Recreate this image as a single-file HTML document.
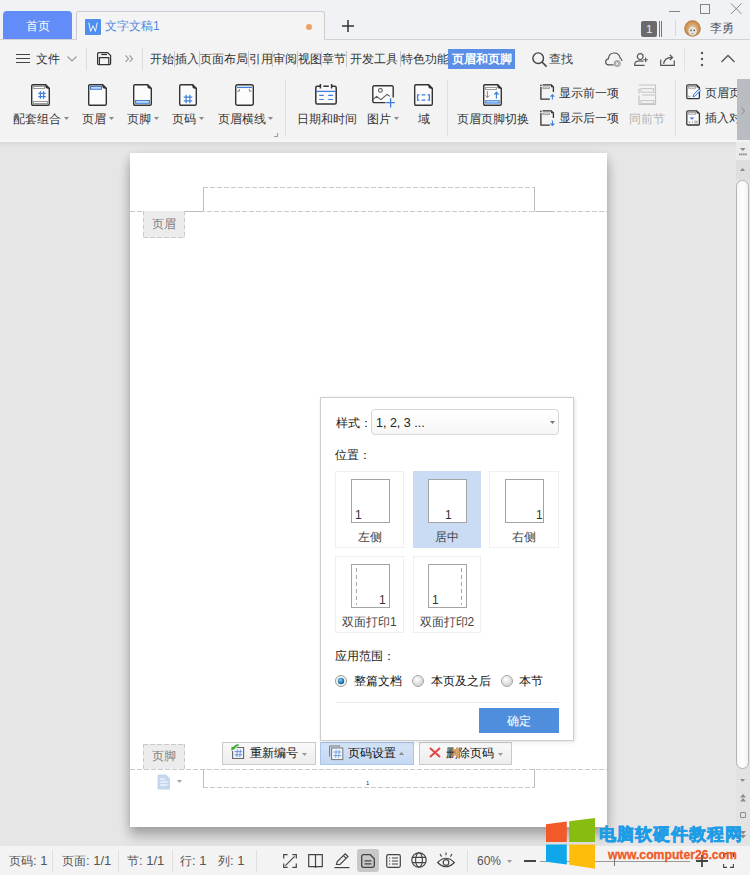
<!DOCTYPE html>
<html><head><meta charset="utf-8"><style>
*{box-sizing:border-box;margin:0;padding:0}
html,body{width:750px;height:875px;overflow:hidden;background:#e6e6e6;font-family:"Liberation Sans",sans-serif;color:#333;}
.a{position:absolute}
.t{position:absolute;white-space:nowrap;font-size:12px;line-height:14px}
svg{position:absolute;overflow:visible}
.sep{position:absolute;width:1px;background:#dcdcdc}
</style></head><body>
<div class="a" style="left:0px;top:0px;width:750px;height:40px;background:#f1f2f6"></div>
<div class="a" style="left:3px;top:11px;width:69px;height:29px;background:#628cf8;border-radius:4px 4px 0 0"></div>
<div class="t" style="left:26px;top:19px;color:#fff;font-size:12px;">首页</div>
<div class="a" style="left:76px;top:11px;width:249px;height:30px;background:#f4f4f4;border:1px solid #cdcdd0;border-bottom:none;border-radius:3px 3px 0 0"></div>
<div class="a" style="left:85px;top:19px;width:16px;height:16px;background:#4d8ef0;border-radius:1px"></div>
<svg style="left:85px;top:19px" width="16" height="16"><path d="M3.8 3.6 L5.6 12.4 L8 6.8 L10.4 12.4 L12.2 3.6" fill="none" stroke="#fff" stroke-width="0.9"/></svg>
<div class="t" style="left:105px;top:19px;color:#4f86e0;font-size:12px;">文字文稿1</div>
<div class="a" style="left:306px;top:24px;width:6px;height:6px;border-radius:3px;background:#f0a060"></div>
<svg style="left:341px;top:19px" width="14" height="14"><path d="M7 1V13M1 7H13" stroke="#333" stroke-width="1.5"/></svg>
<svg style="left:668px;top:4px" width="76" height="12"><path d="M1 7.5H12" stroke="#858585" stroke-width="1"/><rect x="32.5" y="0.5" width="9" height="9" fill="none" stroke="#858585" stroke-width="1"/><path d="M63 -0.5L73.5 10M73.5 -0.5L63 10" stroke="#858585" stroke-width="0.95"/></svg>
<div class="a" style="left:641px;top:21px;width:16px;height:16px;background:#6b6b6b;border-radius:2px"></div>
<div class="t" style="left:646px;top:22px;color:#e8e8e8;font-size:11.5px;">1</div>
<div class="a" style="left:659px;top:21px;width:1px;height:16px;background:#777"></div>
<div class="a" style="left:661px;top:21px;width:1px;height:16px;background:#777"></div>
<div class="sep" style="left:675px;top:20px;height:16px;background:#d8d8d8"></div>
<svg style="left:684px;top:20px" width="17" height="17"><defs><radialGradient id="av" cx="50%" cy="50%" r="50%"><stop offset="0" stop-color="#e0c8a8"/><stop offset="0.7" stop-color="#d49a5a"/><stop offset="1" stop-color="#b77a40"/></radialGradient></defs><circle cx="8.5" cy="8.5" r="8.3" fill="url(#av)"/><ellipse cx="8.6" cy="11" rx="4.2" ry="4.6" fill="#e6e2de"/><circle cx="7" cy="10.4" r="0.8" fill="#555"/><circle cx="10.2" cy="10.4" r="0.8" fill="#555"/><path d="M7.2 13.6H10" stroke="#999" stroke-width="0.8"/></svg>
<div class="t" style="left:710px;top:21px;color:#555;font-size:12px;">李勇</div>
<div class="a" style="left:0px;top:39px;width:750px;height:1px;background:#d2d2d6"></div>
<div class="a" style="left:0px;top:40px;width:750px;height:102px;background:#f3f3f3"></div>
<div class="a" style="left:77px;top:39px;width:247px;height:2px;background:#f4f4f4"></div>
<svg style="left:16px;top:54px" width="14" height="10"><path d="M0 0.5H14M0 4.5H14M0 8.5H14" stroke="#444" stroke-width="1.2"/></svg>
<div class="t" style="left:36px;top:52px;color:#333;font-size:12px;">文件</div>
<svg style="left:67px;top:56px" width="10" height="6"><path d="M0.5 0.5L5 5L9.5 0.5" fill="none" stroke="#999" stroke-width="1.1"/></svg>
<div class="sep" style="left:86px;top:48px;height:23px;background:#dcdcdc"></div>
<svg style="left:97px;top:52px" width="15" height="14"><path d="M1.8 0.6H10.6L13.6 3.6V11.4Q13.6 12.6 12.4 12.6H1.8Q0.6 12.6 0.6 11.4V1.8Q0.6 0.6 1.8 0.6Z" fill="none" stroke="#333" stroke-width="1.2"/><path d="M4.3 2.5H10" stroke="#333" stroke-width="1.2"/><path d="M2.4 12.6V5.6H11.8V12.6" fill="none" stroke="#333" stroke-width="1.2"/></svg>
<svg style="left:125px;top:55px" width="9" height="8"><path d="M0.5 0.5L3.5 3.7L0.5 7M4.5 0.5L7.5 3.7L4.5 7" fill="none" stroke="#999" stroke-width="1.1"/></svg>
<div class="sep" style="left:142px;top:48px;height:23px;background:#dcdcdc"></div>
<div class="t" style="left:150px;top:52px;color:#333;font-size:12px;">开始</div>
<div class="t" style="left:175px;top:52px;color:#333;font-size:12px;">插入</div>
<div class="t" style="left:200px;top:52px;color:#333;font-size:12px;">页面布局</div>
<div class="t" style="left:249px;top:52px;color:#333;font-size:12px;">引用</div>
<div class="t" style="left:273px;top:52px;color:#333;font-size:12px;">审阅</div>
<div class="t" style="left:298px;top:52px;color:#333;font-size:12px;">视图</div>
<div class="t" style="left:322px;top:52px;color:#333;font-size:12px;">章节</div>
<div class="t" style="left:350px;top:52px;color:#333;font-size:12px;">开发工具</div>
<div class="t" style="left:401px;top:52px;color:#333;font-size:12px;">特色功能</div>
<div class="sep" style="left:174px;top:51px;height:16px;background:#c8c8cc"></div>
<div class="sep" style="left:199px;top:51px;height:16px;background:#c8c8cc"></div>
<div class="sep" style="left:248px;top:51px;height:16px;background:#c8c8cc"></div>
<div class="sep" style="left:272px;top:51px;height:16px;background:#c8c8cc"></div>
<div class="sep" style="left:297px;top:51px;height:16px;background:#c8c8cc"></div>
<div class="sep" style="left:321px;top:51px;height:16px;background:#c8c8cc"></div>
<div class="sep" style="left:346px;top:51px;height:16px;background:#c8c8cc"></div>
<div class="sep" style="left:400px;top:51px;height:16px;background:#c8c8cc"></div>
<div class="a" style="left:448px;top:49px;width:67px;height:20px;background:#5b8ee6"></div>
<div class="t" style="left:452px;top:52px;color:#fff;font-size:12px;font-weight:bold">页眉和页脚</div>
<svg style="left:532px;top:52px" width="16" height="16"><circle cx="6.2" cy="6.2" r="5.3" fill="none" stroke="#444" stroke-width="1.4"/><path d="M10 10L14.6 14.6" stroke="#444" stroke-width="1.6"/></svg>
<div class="t" style="left:549px;top:52px;color:#444;font-size:12px;">查找</div>
<svg style="left:605px;top:52px" width="18" height="15"><path d="M8.6 12.8H3.6Q0.7 12.8 0.7 9.9Q0.7 7.3 3.3 6.9Q4 1 9.3 1Q14.2 1 15.3 6.3Q16.8 7 17 9" fill="none" stroke="#555" stroke-width="1.2"/><circle cx="12.2" cy="11.6" r="3.5" fill="#a9a9ac"/><path d="M10.9 10.3L13.5 12.9M13.5 10.3L10.9 12.9" stroke="#fff" stroke-width="1"/></svg>
<svg style="left:634px;top:53px" width="15" height="14"><circle cx="6.2" cy="3.6" r="2.9" fill="none" stroke="#555" stroke-width="1.2"/><path d="M10.6 12.4H0.7V11.2Q0.7 7.8 6 7.8Q8.2 7.8 9.4 8.4" fill="none" stroke="#555" stroke-width="1.2"/><path d="M9.2 6.8H14M11.6 4.4V9.2" stroke="#555" stroke-width="1.1"/></svg>
<svg style="left:660px;top:54px" width="15" height="12"><path d="M0.7 5.6V11.3H14.3V6.6" fill="none" stroke="#555" stroke-width="1.2"/><path d="M3.6 9.8Q4.4 3.6 12 3.4" fill="none" stroke="#555" stroke-width="1.2"/><path d="M9.8 0.8L12.5 3.4L9.9 6" fill="none" stroke="#555" stroke-width="1.2"/></svg>
<div class="sep" style="left:684px;top:48px;height:23px;background:#e2e2e2"></div>
<svg style="left:700px;top:51px" width="4" height="16"><circle cx="2" cy="2" r="1.2" fill="#555"/><circle cx="2" cy="8" r="1.2" fill="#555"/><circle cx="2" cy="14" r="1.2" fill="#555"/></svg>
<svg style="left:721px;top:54px" width="14" height="9"><path d="M0.5 8L7 1.5L13.5 8" fill="none" stroke="#555" stroke-width="1.3"/></svg>
<svg style="left:31px;top:84px" width="19" height="22"><path d="M0.7 2.0Q0.7 0.7 2.0 0.7H14.700000000000001L18.3 4.3V20.0Q18.3 21.3 17.0 21.3H2.0Q0.7 21.3 0.7 20.0Z" fill="#fcfcfc" stroke="#333" stroke-width="1.4"/><path d="M14.5 0.7L18.3 4.5L15.100000000000001 3.9000000000000004Z" fill="#333" stroke="#333" stroke-width="0.8"/><rect x="2.5" y="2.5" width="11" height="2" fill="#fff" stroke="#9a9a9a" stroke-width="1"/><rect x="2.5" y="17.5" width="14" height="2" fill="#fff" stroke="#9a9a9a" stroke-width="1"/><path d="M7.3 9.372H14.7M7.3 12.628H14.7M9.372 7.3V14.7M12.628 7.3V14.7" stroke="#3f7fdc" stroke-width="1.2"/></svg>
<div class="t" style="left:13px;top:112px;color:#333;font-size:12px;">配套组合</div>
<svg style="left:64px;top:117px" width="5" height="3"><path d="M0 0L5 0L2.5 3Z" fill="#8a8a8a"/></svg>
<svg style="left:88px;top:84px" width="19" height="22"><path d="M0.7 2.0Q0.7 0.7 2.0 0.7H14.700000000000001L18.3 4.3V20.0Q18.3 21.3 17.0 21.3H2.0Q0.7 21.3 0.7 20.0Z" fill="#fcfcfc" stroke="#333" stroke-width="1.4"/><path d="M14.5 0.7L18.3 4.5L15.100000000000001 3.9000000000000004Z" fill="#333" stroke="#333" stroke-width="0.8"/><rect x="2.6" y="2.6" width="10.8" height="2.6" fill="#eef4fc" stroke="#3f7fdc" stroke-width="1.2"/></svg>
<div class="t" style="left:82px;top:112px;color:#333;font-size:12px;">页眉</div>
<svg style="left:109px;top:117px" width="5" height="3"><path d="M0 0L5 0L2.5 3Z" fill="#8a8a8a"/></svg>
<svg style="left:133px;top:84px" width="19" height="22"><path d="M0.7 2.0Q0.7 0.7 2.0 0.7H14.700000000000001L18.3 4.3V20.0Q18.3 21.3 17.0 21.3H2.0Q0.7 21.3 0.7 20.0Z" fill="#fcfcfc" stroke="#333" stroke-width="1.4"/><path d="M14.5 0.7L18.3 4.5L15.100000000000001 3.9000000000000004Z" fill="#333" stroke="#333" stroke-width="0.8"/><rect x="2.6" y="16.6" width="13.8" height="2.6" fill="#eef4fc" stroke="#3f7fdc" stroke-width="1.2"/></svg>
<div class="t" style="left:127px;top:112px;color:#333;font-size:12px;">页脚</div>
<svg style="left:154px;top:117px" width="5" height="3"><path d="M0 0L5 0L2.5 3Z" fill="#8a8a8a"/></svg>
<svg style="left:179px;top:84px" width="18" height="22"><path d="M0.7 2.0Q0.7 0.7 2.0 0.7H13.700000000000001L17.3 4.3V20.0Q17.3 21.3 16.0 21.3H2.0Q0.7 21.3 0.7 20.0Z" fill="#fcfcfc" stroke="#333" stroke-width="1.4"/><path d="M13.5 0.7L17.3 4.5L14.100000000000001 3.9000000000000004Z" fill="#333" stroke="#333" stroke-width="0.8"/><path d="M4.75 13.129999999999999H13.25M4.75 16.87H13.25M7.13 10.75V19.25M10.870000000000001 10.75V19.25" stroke="#3f7fdc" stroke-width="1.2"/></svg>
<div class="t" style="left:172px;top:112px;color:#333;font-size:12px;">页码</div>
<svg style="left:199px;top:117px" width="5" height="3"><path d="M0 0L5 0L2.5 3Z" fill="#8a8a8a"/></svg>
<svg style="left:235px;top:84px" width="19" height="22"><path d="M0.7 2.7Q0.7 0.7 2.7 0.7H16.3Q18.3 0.7 18.3 2.7V19.3Q18.3 21.3 16.3 21.3H2.7Q0.7 21.3 0.7 19.3Z" fill="#fcfcfc" stroke="#333" stroke-width="1.4"/><path d="M2 3.4H17" stroke="#3f7fdc" stroke-width="1.3"/><path d="M4.4 5V7.2H2.2M14.4 5V7.2H16.6" fill="none" stroke="#888" stroke-width="1"/></svg>
<div class="t" style="left:218px;top:112px;color:#333;font-size:12px;">页眉横线</div>
<svg style="left:268px;top:117px" width="5" height="3"><path d="M0 0L5 0L2.5 3Z" fill="#8a8a8a"/></svg>
<svg style="left:274px;top:133px" width="4" height="4"><path d="M3.5 0V3.5H0" fill="none" stroke="#999" stroke-width="1"/></svg>
<div class="sep" style="left:285px;top:80px;height:56px;background:#e0e0e0"></div>
<svg style="left:315px;top:84px" width="22" height="21"><path d="M5.4 2.3H2.2Q0.8 2.3 0.8 3.8V18.5Q0.8 20 2.2 20H19.8Q21.2 20 21.2 18.5V3.8Q21.2 2.3 19.8 2.3H16.6M8.3 2.3H13.8" fill="#fbfbfb" stroke="#333" stroke-width="1.5"/><path d="M5.4 0V4.6M16.6 0V4.6" stroke="#333" stroke-width="1.5"/><path d="M1 7.4H21" stroke="#3f7fdc" stroke-width="1.3"/><path d="M4.2 11.4H8.8M13.2 11.4H18M4.2 15.5H8.8M13.2 15.5H18" stroke="#3f7fdc" stroke-width="1.2"/></svg>
<div class="t" style="left:297px;top:112px;color:#333;font-size:12px;">日期和时间</div>
<svg style="left:372px;top:85px" width="24" height="23"><path d="M13.5 17.6H2.4Q0.8 17.6 0.8 16V2.4Q0.8 0.8 2.4 0.8H19.6Q21.2 0.8 21.2 2.4V12.6" fill="#fbfbfb" stroke="#333" stroke-width="1.4"/><circle cx="8.4" cy="5.4" r="1.9" fill="none" stroke="#555" stroke-width="1.1"/><path d="M0.8 14.6L4.6 11.4L9 14.6L15 9.4L17.8 11.4" fill="none" stroke="#555" stroke-width="1.1"/><path d="M14.2 17.6H22.8M18.6 13.2V22.6" stroke="#3f7fdc" stroke-width="1.3"/></svg>
<div class="t" style="left:367px;top:112px;color:#333;font-size:12px;">图片</div>
<svg style="left:394px;top:117px" width="5" height="3"><path d="M0 0L5 0L2.5 3Z" fill="#8a8a8a"/></svg>
<svg style="left:414px;top:84px" width="19" height="22"><path d="M0.7 2.0Q0.7 0.7 2.0 0.7H14.700000000000001L18.3 4.3V20.0Q18.3 21.3 17.0 21.3H2.0Q0.7 21.3 0.7 20.0Z" fill="#fcfcfc" stroke="#333" stroke-width="1.4"/><path d="M14.5 0.7L18.3 4.5L15.100000000000001 3.9000000000000004Z" fill="#333" stroke="#333" stroke-width="0.8"/><path d="M5.4 10.8H3.6V16.2H5.4M7.6 10.8H11.4M7.6 16.2H11.4M13.6 10.8H15.4V16.2H13.6" fill="none" stroke="#3f7fdc" stroke-width="1.3"/></svg>
<div class="t" style="left:418px;top:112px;color:#333;font-size:12px;">域</div>
<div class="sep" style="left:447px;top:80px;height:56px;background:#e0e0e0"></div>
<svg style="left:483px;top:84px" width="19" height="22"><path d="M0.7 2.0Q0.7 0.7 2.0 0.7H14.700000000000001L18.3 4.3V20.0Q18.3 21.3 17.0 21.3H2.0Q0.7 21.3 0.7 20.0Z" fill="#fcfcfc" stroke="#333" stroke-width="1.4"/><path d="M14.5 0.7L18.3 4.5L15.100000000000001 3.9000000000000004Z" fill="#333" stroke="#333" stroke-width="0.8"/><rect x="2.5" y="3.5" width="11" height="2" fill="#fff" stroke="#9a9a9a" stroke-width="1"/><path d="M4.4 7.2V13.4M2.4 11.4L4.4 13.6L6.4 11.4" fill="none" stroke="#888" stroke-width="1"/><path d="M13.4 14.4V8.4M11.2 10.6L13.4 8.2L15.6 10.6" fill="none" stroke="#3f7fdc" stroke-width="1.2"/><rect x="2.8" y="16.8" width="13.4" height="2.2" fill="#eaf8fb" stroke="#3f7fdc" stroke-width="1.2"/></svg>
<div class="t" style="left:457px;top:112px;color:#333;font-size:12px;">页眉页脚切换</div>
<svg style="left:540px;top:84px" width="16" height="16"><path d="M0.9 2.8V15.1H9.8M2.6 0.9H11.2L13.4 3.1V8" fill="none" stroke="#333" stroke-width="1.3"/><rect x="0.2" y="0.6" width="1.4" height="1.4" fill="#333"/><path d="M11 0.6L13.7 3.3H11Z" fill="#333"/><rect x="3" y="3" width="6.4" height="1.6" fill="none" stroke="#9a9a9a" stroke-width="0.9"/><path d="M12.4 10.8V15.6M10.5 12.7L12.4 10.8L14.3 12.7" fill="none" stroke="#3f7fdc" stroke-width="1.1"/></svg>
<div class="t" style="left:559px;top:86px;color:#333;font-size:12px;">显示前一项</div>
<svg style="left:540px;top:110px" width="16" height="16"><path d="M0.9 2.8V15.1H9.8M2.6 0.9H11.2L13.4 3.1V8" fill="none" stroke="#333" stroke-width="1.3"/><rect x="0.2" y="0.6" width="1.4" height="1.4" fill="#333"/><path d="M11 0.6L13.7 3.3H11Z" fill="#333"/><rect x="3" y="3" width="6.4" height="1.6" fill="none" stroke="#9a9a9a" stroke-width="0.9"/><path d="M12.4 10.4V15.4M10.5 13.5L12.4 15.4L14.3 13.5" fill="none" stroke="#3f7fdc" stroke-width="1.1"/></svg>
<div class="t" style="left:559px;top:111px;color:#333;font-size:12px;">显示后一项</div>
<svg style="left:638px;top:84px" width="19" height="22"><path d="M1 1H17.5V10.2M1 4.6V9.6M1 11.6V20.4H17.5V12Q17.5 11 16.5 11H4" fill="none" stroke="#c4c4c4" stroke-width="1.2"/><rect x="3" y="4.6" width="12.6" height="3.6" fill="none" stroke="#c8c8c8" stroke-width="1.1"/><rect x="3" y="16.6" width="12.6" height="3" fill="none" stroke="#c8c8c8" stroke-width="1.1"/></svg>
<div class="t" style="left:629px;top:112px;color:#b4b4b4;font-size:12px;">同前节</div>
<div class="sep" style="left:675px;top:80px;height:56px;background:#e0e0e0"></div>
<svg style="left:686px;top:84px" width="16" height="16"><path d="M1.5 0.8H10.6L13.4 3.6V13.6Q13.4 14.6 12.4 14.6H1.8Q0.8 14.6 0.8 13.6V1.8Q0.8 0.8 1.8 0.8" fill="#fbfbfb" stroke="#333" stroke-width="1.3"/><path d="M10.6 0.5L13.7 3.6H10.6Z" fill="#333"/><rect x="2.6" y="2.6" width="7" height="1.6" fill="none" stroke="#9a9a9a" stroke-width="0.9"/><path d="M2.6 11.6V12.8H4.6" fill="none" stroke="#9a9a9a" stroke-width="0.9"/><path d="M7 13L7.6 10.4L13 5L14.6 6.6L9.2 12Z" fill="#d5e3f8" stroke="#3f7fdc" stroke-width="1"/></svg>
<div class="t" style="left:705px;top:86px;color:#333;font-size:12px;">页眉页</div>
<svg style="left:686px;top:110px" width="16" height="16"><path d="M1.5 0.8H10.6L13.4 3.6V14Q13.4 15 12.4 15H1.8Q0.8 15 0.8 14V1.8Q0.8 0.8 1.8 0.8" fill="#fbfbfb" stroke="#333" stroke-width="1.3"/><path d="M10.6 0.5L13.7 3.6H10.6Z" fill="#333"/><rect x="2.6" y="2.6" width="7" height="1.6" fill="none" stroke="#9a9a9a" stroke-width="0.9"/><path d="M3.4 7.4H8.4L5.9 9.8Z" fill="#3f7fdc"/><path d="M3.2 11.2V13H4.4M6.4 11.2V13M8.2 11.2H11.2V13H8.2" fill="none" stroke="#9a9a9a" stroke-width="0.9"/></svg>
<div class="t" style="left:705px;top:111px;color:#333;font-size:12px;">插入对</div>
<div class="a" style="left:737px;top:79px;width:13px;height:61px;background:#b9bcc1"></div>
<svg style="left:741px;top:107px" width="5" height="8"><path d="M0.5 0.5L3.5 4L0.5 7.5" fill="none" stroke="#888" stroke-width="1"/></svg>
<div class="a" style="left:0px;top:142px;width:736px;height:704px;background:#e6e6e6"></div>
<div class="a" style="left:0px;top:142px;width:736px;height:6px;background:linear-gradient(#d9d9d9,#e6e6e6)"></div>
<div class="a" style="left:0px;top:138px;width:737px;height:4px;background:linear-gradient(#f3f3f3,#f8f8f8)"></div>
<div class="a" style="left:130px;top:153px;width:477px;height:674px;background:#fff;box-shadow:0 4px 10px rgba(0,0,0,0.24),0 12px 12px rgba(0,0,0,0.14)"></div>
<div class="a" style="left:130px;top:211px;width:477px;height:1px;background:repeating-linear-gradient(90deg,#c9c9c9 0 5px,transparent 5px 7px)"></div>
<div class="a" style="left:203px;top:187px;width:332px;height:1px;background:repeating-linear-gradient(90deg,#c9c9c9 0 5px,transparent 5px 7px)"></div>
<div class="a" style="left:203px;top:187px;width:1px;height:24px;background:#bdbdbd"></div>
<div class="a" style="left:534px;top:187px;width:1px;height:24px;background:#bdbdbd"></div>
<div class="a" style="left:185px;top:211px;width:18px;height:1px;background:#bdbdbd"></div>
<div class="a" style="left:535px;top:211px;width:18px;height:1px;background:#bdbdbd"></div>
<div class="a" style="left:143px;top:211px;width:42px;height:27px;background:#ececec"></div>
<div class="a" style="left:143px;top:237px;width:42px;height:1px;background:repeating-linear-gradient(90deg,#c9c9c9 0 5px,transparent 5px 7px)"></div>
<div class="a" style="left:143px;top:211px;width:1px;height:27px;background:repeating-linear-gradient(180deg,#c9c9c9 0 4px,transparent 4px 7px)"></div>
<div class="a" style="left:184px;top:211px;width:1px;height:27px;background:repeating-linear-gradient(180deg,#c9c9c9 0 4px,transparent 4px 7px)"></div>
<div class="t" style="left:152px;top:217px;color:#808080;font-size:12px;">页眉</div>
<div class="a" style="left:143px;top:744px;width:42px;height:25px;background:#ececec"></div>
<div class="a" style="left:143px;top:744px;width:42px;height:1px;background:repeating-linear-gradient(90deg,#c9c9c9 0 5px,transparent 5px 7px)"></div>
<div class="a" style="left:143px;top:744px;width:1px;height:25px;background:repeating-linear-gradient(180deg,#c9c9c9 0 4px,transparent 4px 7px)"></div>
<div class="a" style="left:184px;top:744px;width:1px;height:25px;background:repeating-linear-gradient(180deg,#c9c9c9 0 4px,transparent 4px 7px)"></div>
<div class="t" style="left:152px;top:749px;color:#808080;font-size:12px;">页脚</div>
<div class="a" style="left:130px;top:769px;width:477px;height:1px;background:repeating-linear-gradient(90deg,#c9c9c9 0 5px,transparent 5px 7px)"></div>
<div class="a" style="left:203px;top:787px;width:332px;height:1px;background:repeating-linear-gradient(90deg,#c9c9c9 0 5px,transparent 5px 7px)"></div>
<div class="a" style="left:203px;top:769px;width:1px;height:19px;background:#bdbdbd"></div>
<div class="a" style="left:534px;top:769px;width:1px;height:19px;background:#bdbdbd"></div>
<div class="t" style="left:366px;top:779px;color:#333;font-size:6px;line-height:8px">1</div>
<svg style="left:157px;top:774px" width="14" height="16"><path d="M0.5 0.5H9L13 4.5V15.5H0.5Z" fill="#c5d6ee"/><path d="M3 5H8M3 8H10.5M3 11H10.5" stroke="#fff" stroke-width="1.2"/></svg>
<svg style="left:177px;top:780px" width="5" height="3"><path d="M0 0L5 0L2.5 3Z" fill="#9aa"/></svg>
<div class="a" style="left:222px;top:742px;width:94px;height:23px;background:linear-gradient(#f9f9f9,#ededed);border:1px solid #c9c9c9"></div>
<svg style="left:231px;top:744px" width="15" height="16"><path d="M1.6 7V14.5H12.6V3.5H5.6" fill="none" stroke="#666" stroke-width="1.1"/><path d="M3.6 7.6H11.2M3.6 10.8H11.2M6.4 5.4L5.8 13M9.4 5.4L8.8 13" stroke="#5b8ce8" stroke-width="0.9"/><path d="M7.6 0.9Q4 1.4 2.6 4.4" fill="none" stroke="#3cab3c" stroke-width="1.9"/><path d="M0.2 6.8L0.6 2.4L4.6 4.4Z" fill="#3cab3c"/></svg>
<div class="t" style="left:250px;top:746px;color:#111;font-size:12px;">重新编号</div>
<svg style="left:302px;top:753px" width="5" height="3"><path d="M0 0L5 0L2.5 3Z" fill="#999"/></svg>
<div class="a" style="left:320px;top:742px;width:94px;height:23px;background:linear-gradient(#d5e4f7,#c4d8f2);border:1px solid #a9c5ea"></div>
<svg style="left:329px;top:745px" width="15" height="16"><path d="M0.6 11.6V1H11.2" fill="none" stroke="#777" stroke-width="1"/><rect x="2.6" y="3" width="11.2" height="11.6" fill="#f0f6fd" stroke="#777" stroke-width="1"/><path d="M4.4 7H12.2M4.4 10.6H12.2M7.2 5L6.7 12.8M10.2 5L9.7 12.8" stroke="#6a96e6" stroke-width="0.85"/></svg>
<div class="t" style="left:348px;top:746px;color:#111;font-size:12px;">页码设置</div>
<svg style="left:399px;top:752px" width="5" height="3"><path d="M0 3L2.5 0L5 3Z" fill="#888"/></svg>
<div class="a" style="left:419px;top:742px;width:93px;height:23px;background:linear-gradient(#f9f9f9,#ededed);border:1px solid #c9c9c9"></div>
<svg style="left:429px;top:747px" width="12" height="11"><path d="M1 1L11 10M11 1L1 10" stroke="#e0464a" stroke-width="2"/></svg>
<div class="t" style="left:446px;top:746px;color:#111;font-size:12px;">删除页码</div>
<svg style="left:498px;top:753px" width="5" height="3"><path d="M0 0L5 0L2.5 3Z" fill="#999"/></svg>
<div class="a" style="left:320px;top:397px;width:254px;height:344px;background:#fff;border:1px solid #cdcdcd;box-shadow:1px 1px 4px rgba(0,0,0,0.12)"></div>
<div class="t" style="left:336px;top:416px;color:#222;font-size:12px;">样式：</div>
<div class="a" style="left:371px;top:409px;width:188px;height:26px;background:linear-gradient(#fff,#f6f6f6);border:1px solid #d6d6d6;border-radius:4px"></div>
<div class="t" style="left:376px;top:416px;color:#222;font-size:12.5px;">1, 2, 3 ...</div>
<svg style="left:550px;top:421px" width="5" height="3"><path d="M0 0L5 0L2.5 3Z" fill="#777"/></svg>
<div class="t" style="left:335px;top:448px;color:#222;font-size:12px;">位置：</div>
<div class="a" style="left:335px;top:471px;width:69px;height:77px;background:#fff;border:1px solid #efefef;"></div>
<div class="a" style="left:351px;top:479px;width:39px;height:44px;background:#fff;border:1px solid #a4a4a4"></div>
<div class="t" style="left:355px;top:508px;color:#333;font-size:12px;">1</div>
<div class="t" style="left:357.5px;top:530px;color:#444;font-size:12px;">左侧</div>
<div class="a" style="left:413px;top:471px;width:68px;height:77px;background:#c9dcf3;"></div>
<div class="a" style="left:428px;top:479px;width:39px;height:44px;background:#fff;border:1px solid #a4a4a4"></div>
<div class="t" style="left:445px;top:508px;color:#333;font-size:12px;">1</div>
<div class="t" style="left:435.0px;top:530px;color:#444;font-size:12px;">居中</div>
<div class="a" style="left:489px;top:471px;width:70px;height:77px;background:#fff;border:1px solid #efefef;"></div>
<div class="a" style="left:505px;top:479px;width:39px;height:44px;background:#fff;border:1px solid #a4a4a4"></div>
<div class="t" style="left:536px;top:508px;color:#333;font-size:12px;">1</div>
<div class="t" style="left:512.0px;top:530px;color:#444;font-size:12px;">右侧</div>
<div class="a" style="left:335px;top:556px;width:69px;height:77px;background:#fff;border:1px solid #efefef;"></div>
<div class="a" style="left:351px;top:564px;width:39px;height:44px;background:#fff;border:1px solid #a4a4a4"></div>
<div class="a" style="left:356px;top:568px;width:1px;height:37px;background:repeating-linear-gradient(180deg,#a8a8a8 0 4px,transparent 4px 7px)"></div>
<div class="t" style="left:379px;top:593px;color:#333;font-size:12px;">1</div>
<div class="t" style="left:342.0px;top:615px;color:#444;font-size:12px;">双面打印1</div>
<div class="a" style="left:413px;top:556px;width:68px;height:77px;background:#fff;border:1px solid #efefef;"></div>
<div class="a" style="left:428px;top:564px;width:39px;height:44px;background:#fff;border:1px solid #a4a4a4"></div>
<div class="a" style="left:461px;top:568px;width:1px;height:37px;background:repeating-linear-gradient(180deg,#a8a8a8 0 4px,transparent 4px 7px)"></div>
<div class="t" style="left:432px;top:593px;color:#333;font-size:12px;">1</div>
<div class="t" style="left:419.5px;top:615px;color:#444;font-size:12px;">双面打印2</div>
<div class="t" style="left:335px;top:649px;color:#222;font-size:12px;">应用范围：</div>
<svg style="left:335px;top:675px" width="12" height="12"><defs><radialGradient id="rg" cx="40%" cy="35%" r="60%"><stop offset="0" stop-color="#7fd0f5"/><stop offset="1" stop-color="#1360a0"/></radialGradient></defs><circle cx="6" cy="6" r="5.5" fill="#f4f4f4" stroke="#9a9a9a" stroke-width="1"/><circle cx="6" cy="6" r="3.2" fill="url(#rg)"/></svg>
<div class="t" style="left:354px;top:674px;color:#111;font-size:12px;">整篇文档</div>
<svg style="left:412px;top:675px" width="12" height="12"><defs><radialGradient id="rg2" cx="40%" cy="35%" r="65%"><stop offset="0" stop-color="#fff"/><stop offset="1" stop-color="#d0d0d0"/></radialGradient></defs><circle cx="6" cy="6" r="5.5" fill="url(#rg2)" stroke="#a8a8a8" stroke-width="1"/></svg>
<div class="t" style="left:431px;top:674px;color:#111;font-size:12px;">本页及之后</div>
<svg style="left:501px;top:675px" width="12" height="12"><defs><radialGradient id="rg2" cx="40%" cy="35%" r="65%"><stop offset="0" stop-color="#fff"/><stop offset="1" stop-color="#d0d0d0"/></radialGradient></defs><circle cx="6" cy="6" r="5.5" fill="url(#rg2)" stroke="#a8a8a8" stroke-width="1"/></svg>
<div class="t" style="left:519px;top:674px;color:#111;font-size:12px;">本节</div>
<div class="a" style="left:336px;top:702px;width:223px;height:1px;background:#ececec"></div>
<div class="a" style="left:479px;top:708px;width:80px;height:25px;background:#4f8edc"></div>
<div class="t" style="left:507px;top:714px;color:#fff;font-size:12px;">确定</div>
<div class="a" style="left:736px;top:142px;width:14px;height:704px;background:#e3e3e3"></div>
<div class="a" style="left:736px;top:142px;width:14px;height:18px;background:#ebebeb"></div>
<svg style="left:739px;top:148px" width="9" height="8"><path d="M1 0H6.6L3.8 3Z" fill="#8a8a8a"/><path d="M0 6.4H8" stroke="#8a8a8a" stroke-width="1.8" stroke-dasharray="1.6 0.5"/></svg>
<div class="a" style="left:736px;top:160px;width:14px;height:20px;background:#dedede"></div>
<svg style="left:740px;top:168px" width="5" height="3"><path d="M0 3L2.5 0L5 3Z" fill="#8a8a8a"/></svg>
<div class="a" style="left:736px;top:180px;width:13px;height:589px;background:linear-gradient(90deg,#f6f6f6,#fdfdfd 50%,#f3f3f3);border:1px solid #b4b4b4;border-radius:7px"></div>
<svg style="left:740px;top:779px" width="5" height="3"><path d="M0 0L5 0L2.5 3Z" fill="#8a8a8a"/></svg>
<svg style="left:740px;top:794px" width="6" height="8"><path d="M0 3.5L3 0L6 3.5ZM0 7.5L3 4L6 7.5Z" fill="#8a8a8a"/></svg>
<div class="a" style="left:740px;top:812px;width:6px;height:6px;border:1px solid #8a8a8a;border-radius:1px"></div>
<svg style="left:740px;top:831px" width="6" height="8"><path d="M0 0L6 0L3 3.5ZM0 4L6 4L3 7.5Z" fill="#8a8a8a"/></svg>
<div class="a" style="left:0px;top:846px;width:750px;height:29px;background:#f3f3f3"></div>
<div class="t" style="left:9px;top:854px;color:#555;font-size:12px;">页码<span style="font-size:13px">: 1</span></div>
<div class="t" style="left:62px;top:854px;color:#555;font-size:12px;">页面<span style="font-size:13px">: 1/1</span></div>
<div class="t" style="left:127px;top:854px;color:#555;font-size:12px;">节<span style="font-size:13px">: 1/1</span></div>
<div class="t" style="left:180px;top:854px;color:#555;font-size:12px;">行<span style="font-size:13px">: 1</span></div>
<div class="t" style="left:218px;top:854px;color:#555;font-size:12px;">列<span style="font-size:13px">: 1</span></div>
<div class="sep" style="left:52px;top:850px;height:22px;background:#e0e0e0"></div>
<div class="sep" style="left:118px;top:850px;height:22px;background:#e0e0e0"></div>
<div class="sep" style="left:172px;top:850px;height:22px;background:#e0e0e0"></div>
<div class="sep" style="left:256px;top:850px;height:22px;background:#e0e0e0"></div>
<div class="sep" style="left:467px;top:850px;height:22px;background:#e0e0e0"></div>
<svg style="left:283px;top:854px" width="14" height="14"><path d="M0.7 4.6V0.7H4.6M9.4 0.7H13.3V4.6M13.3 9.4V13.3H9.4M4.6 13.3H0.7V9.4" fill="none" stroke="#444" stroke-width="1.2"/><path d="M2.4 11.6L11.6 2.4" stroke="#444" stroke-width="1.1"/></svg>
<svg style="left:308px;top:854px" width="15" height="14"><path d="M0.7 0.7H14.3V12.6H8.3L7.5 13.4L6.7 12.6H0.7Z" fill="none" stroke="#444" stroke-width="1.2"/><path d="M7.5 0.7V13" stroke="#444" stroke-width="1.2"/></svg>
<svg style="left:334px;top:853px" width="16" height="16"><path d="M2.5 11.5L3.3 8.6L11.2 0.9L13.9 3.6L6 11.4Z" fill="none" stroke="#444" stroke-width="1.2"/><path d="M9.4 2.7L12.1 5.4" stroke="#444" stroke-width="1.1"/><path d="M0.5 14.6H15.5" stroke="#444" stroke-width="1.2"/></svg>
<div class="a" style="left:357px;top:849px;width:22px;height:23px;background:#c8c8c8;border-radius:3px"></div>
<svg style="left:361px;top:854px" width="14" height="14"><path d="M2 0.7H9.3L13.3 4.7V11.6Q13.3 13.3 11.6 13.3H2.4Q0.7 13.3 0.7 11.6V2.4Q0.7 0.7 2.4 0.7Z" fill="none" stroke="#444" stroke-width="1.3"/><path d="M3.6 6.8H10.4M3.6 9.8H10.4" stroke="#444" stroke-width="1.2"/></svg>
<svg style="left:386px;top:854px" width="15" height="14"><rect x="0.7" y="0.7" width="13.6" height="12.6" rx="1.5" fill="none" stroke="#444" stroke-width="1.2"/><path d="M3 4H4.2M3 7H4.2M3 10H4.2M6 4H12M6 7H12M6 10H12" stroke="#444" stroke-width="1.1"/></svg>
<svg style="left:411px;top:852px" width="16" height="16"><circle cx="8" cy="8" r="7.2" fill="none" stroke="#444" stroke-width="1.2"/><ellipse cx="8" cy="8" rx="3.4" ry="7.2" fill="none" stroke="#444" stroke-width="1.1"/><path d="M1.2 5.4H14.8M1.2 10.6H14.8" stroke="#444" stroke-width="1.1"/></svg>
<svg style="left:437px;top:852px" width="18" height="17"><path d="M0.7 10.5Q9 2 17.3 10.5Q9 19 0.7 10.5Z" fill="none" stroke="#444" stroke-width="1.2"/><circle cx="9" cy="10.5" r="2.8" fill="none" stroke="#444" stroke-width="1.2"/><path d="M9 0.5V3.2M3 2L4.6 4.6M15 2L13.4 4.6" stroke="#444" stroke-width="1.1"/></svg>
<div class="t" style="left:477px;top:854px;color:#555;font-size:12px;">60%</div>
<svg style="left:507px;top:860px" width="5" height="3"><path d="M0 0L5 0L2.5 3Z" fill="#999"/></svg>
<div class="a" style="left:524px;top:860px;width:12px;height:2px;background:#444"></div>
<div class="a" style="left:540px;top:861px;width:150px;height:1px;background:#9a9a9a"></div>
<div class="a" style="left:614px;top:857px;width:1px;height:9px;background:#777"></div>
<svg style="left:696px;top:855px" width="12" height="12"><path d="M6 0V12M0 6H12" stroke="#444" stroke-width="1.8"/></svg>
<svg style="left:723px;top:853px" width="11" height="15"><path d="M0.6 4V0.6H4M7 0.6H10.4V4M10.4 11V14.4H7M4 14.4H0.6V11" fill="none" stroke="#444" stroke-width="1.1"/></svg>
<svg style="left:546px;top:818px" width="50" height="51"><path d="M0 6.3L20.8 3.6V24H0Z" fill="#f25a2a"/><path d="M23.2 3.3L49 0V24H23.2Z" fill="#86bd10"/><path d="M0 26.6H20.8V46.5L0 43.8Z" fill="#10a7ea"/><path d="M23.2 26.6H49V50.7L23.2 46.8Z" fill="#fdbd0a"/></svg>
<div class="t" style="left:599px;top:825px;color:#1e9de6;font-size:17px;font-weight:bold;line-height:20px;letter-spacing:0.95px;-webkit-text-stroke:0.7px #1e9de6">电脑软硬件教程网</div>
<div class="t" style="left:608px;top:847px;color:#f05a28;font-size:12.2px;font-weight:bold;line-height:16px;-webkit-text-stroke:0.3px #f05a28">www.computer26.com</div>
</body></html>
